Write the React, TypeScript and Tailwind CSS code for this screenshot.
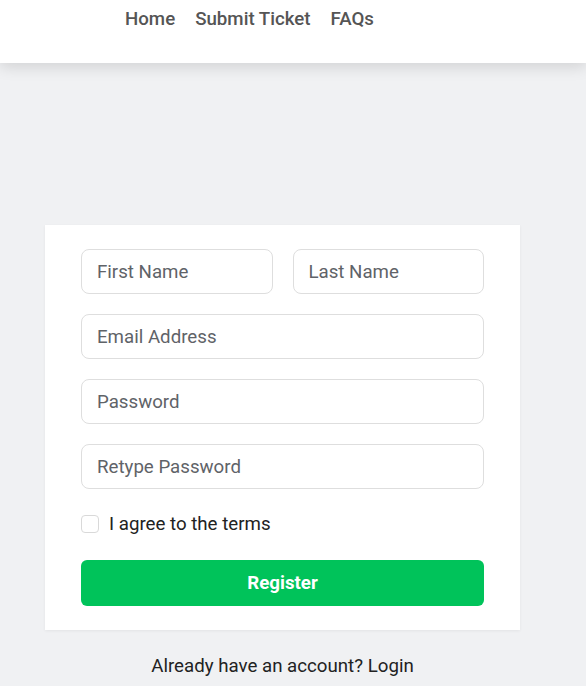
import React from "react";

export default function App() {
  const inputCls =
    "h-[45px] w-full rounded-[8px] border border-[#dedede] bg-white px-[15px] text-[18.7px] text-[#333] placeholder:text-[#5f6368] outline-none";
  return (
    <div className="min-h-[686px] bg-[#f0f1f3] font-['Roboto',sans-serif]">
      <header className="h-[63px] bg-white shadow-[0_4px_14px_rgba(0,0,0,0.13)] relative z-10">
        <nav className="flex gap-[20px] pl-[125px] pt-[7px] text-[18.7px] leading-[24px] font-medium text-[#555]">
          <span>Home</span>
          <span>Submit Ticket</span>
          <span>FAQs</span>
        </nav>
      </header>
      <div className="w-[565px] flex flex-col items-center pt-[162px]">
        <div className="w-[475px] bg-white px-[36px] pt-[24px] pb-[24px] shadow-[0_1px_3px_rgba(0,0,0,0.06)]">
          <div className="flex flex-col gap-[20px]">
            <div className="flex gap-[20px]">
              <input className={inputCls} placeholder="First Name" />
              <input className={inputCls} placeholder="Last Name" />
            </div>
            <input className={inputCls} placeholder="Email Address" />
            <input className={inputCls} placeholder="Password" type="password" />
            <input className={inputCls} placeholder="Retype Password" type="password" />
          </div>
          <label className="mt-[23px] flex items-center gap-[10px] text-[18.7px] leading-[24px] text-[#222]">
            <span className="h-[18px] w-[18px] rounded-[4px] border border-[#d9d9d9] bg-white" />
            I agree to the terms
          </label>
          <button className="mt-[24px] h-[46px] w-full rounded-[6px] bg-[#00c35a] text-[18.7px] font-bold text-white">
            Register
          </button>
        </div>
        <p className="mt-[24px] text-[18.7px] leading-[24px] text-[#222]">
          Already have an account? Login
        </p>
      </div>
    </div>
  );
}
